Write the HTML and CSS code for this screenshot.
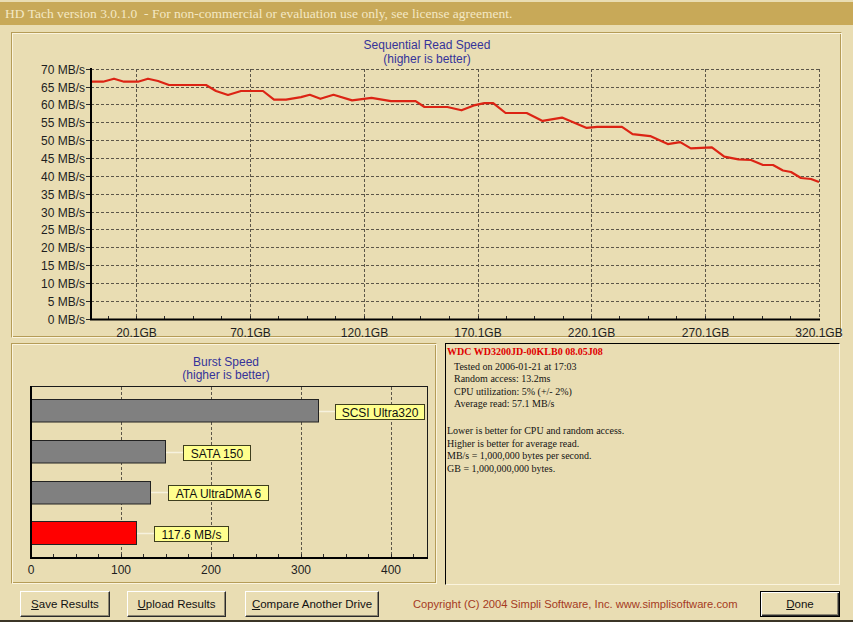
FILE: index.html
```html
<!DOCTYPE html>
<html>
<head>
<meta charset="utf-8">
<title>HD Tach 3.0.1.0</title>
<link rel="stylesheet" href="styles.css">
</head>
<body>
<div class="window">
  <div class="titlebar">HD Tach version 3.0.1.0  - For non-commercial or evaluation use only, see license agreement.</div>
  <div class="main">
    <section class="panel chart-panel">
      <svg class="chart-svg" width="827" height="302" viewBox="13 34 827 302">
        <text class="chart-title" x="426" y="48">Sequential Read Speed</text>
        <text class="chart-title" x="426" y="61.5">(higher is better)</text>
        <path class="grid" d="M90 68.5H818M90 86.5H818M90 103.5H818M90 121.5H818M90 139.5H818M90 157.5H818M90 175.5H818M90 193.5H818M90 211.5H818M90 228.5H818M90 246.5H818M90 264.5H818M90 282.5H818M90 300.5H818"/>
        <path class="grid" d="M135.5 68V318M249.5 68V318M363.5 68V318M477.5 68V318M590.5 68V318M704.5 68V318M818.5 68V318"/>
        <path class="tick" d="M85 68.5H90M85 86.5H90M85 103.5H90M85 121.5H90M85 139.5H90M85 157.5H90M85 175.5H90M85 193.5H90M85 211.5H90M85 228.5H90M85 246.5H90M85 264.5H90M85 282.5H90M85 300.5H90M85 318.5H90"/>
        <path class="tick" d="M107.5 318V315M135.5 318V315M163.5 318V315M192.5 318V315M220.5 318V315M249.5 318V315M277.5 318V315M306.5 318V315M334.5 318V315M363.5 318V315M391.5 318V315M419.5 318V315M448.5 318V315M477.5 318V315M505.5 318V315M533.5 318V315M562.5 318V315M590.5 318V315M618.5 318V315M647.5 318V315M675.5 318V315M704.5 318V315M732.5 318V315M761.5 318V315M789.5 318V315"/>
        <path class="axis" d="M90 67V319.5M89 318.5H819"/>
        <g class="ylabels">
          <text x="84" y="72.5">70 MB/s</text>
          <text x="84" y="90.5">65 MB/s</text>
          <text x="84" y="107.5">60 MB/s</text>
          <text x="84" y="125.5">55 MB/s</text>
          <text x="84" y="143.5">50 MB/s</text>
          <text x="84" y="161.5">45 MB/s</text>
          <text x="84" y="179.5">40 MB/s</text>
          <text x="84" y="197.5">35 MB/s</text>
          <text x="84" y="215.5">30 MB/s</text>
          <text x="84" y="232.5">25 MB/s</text>
          <text x="84" y="250.5">20 MB/s</text>
          <text x="84" y="268.5">15 MB/s</text>
          <text x="84" y="286.5">10 MB/s</text>
          <text x="84" y="304.5">5 MB/s</text>
          <text x="84" y="322.5">0 MB/s</text>
        </g>
        <g class="xlabels">
          <text x="135.5" y="336">20.1GB</text>
          <text x="249.5" y="336">70.1GB</text>
          <text x="363.5" y="336">120.1GB</text>
          <text x="477" y="336">170.1GB</text>
          <text x="590.5" y="336">220.1GB</text>
          <text x="704.5" y="336">270.1GB</text>
          <text x="818" y="336">320.1GB</text>
        </g>
        <polyline class="speed" points="91,80.7 102,80.7 113,77.7 123,80.7 137,80.7 147,77.7 157,80 168,84 205,84 215,90 227,94 240,90 262,90 273,98.7 285,98.7 300,96.1 308.8,93.8 319.4,97.8 332.5,93.8 351.1,99.4 370.5,96.8 390,100.1 414.6,100.1 423.5,106 446.4,106 460.5,109.3 472.8,104.4 483.4,102.1 492.2,102.1 504.6,112 525.7,112 541.6,119.9 561,116.6 585.7,126.9 596.3,125.9 621,125.9 631.6,133.1 649.2,135.1 666.8,143.1 679.2,141.1 689.8,147.4 710.9,146.4 723.3,155.6 737.4,158.3 750,159 762,164 772,164 782,169.5 790,171 800,177 810,178 818,181"/>
      </svg>
    </section>
    <div class="row">
      <section class="panel burst-panel">
        <svg class="chart-svg" width="422" height="237" viewBox="13 345 422 237">
          <text class="chart-title" x="225" y="365">Burst Speed</text>
          <text class="chart-title" x="225" y="377.5">(higher is better)</text>
          <path class="grid" d="M120.5 386V556M210.5 386V556M300.5 386V556M390.5 386V556"/>
          <path class="frame" d="M30 385.5H426.5M426.5 385V557"/>
          <path class="tick" d="M52.5 556V553M75.5 556V553M97.5 556V553M120.5 556V553M142.5 556V553M165.5 556V553M187.5 556V553M210.5 556V553M232.5 556V553M255.5 556V553M277.5 556V553M300.5 556V553M322.5 556V553M345.5 556V553M367.5 556V553M390.5 556V553M412.5 556V553"/>
          <path class="connector" d="M318 410.5H334M165 451.5H182M150 491.5H167M136 532.5H153"/>
          <rect class="bar" x="30.5" y="398.5" width="287" height="22.5"/>
          <rect class="bar" x="30.5" y="439.5" width="134" height="22.5"/>
          <rect class="bar" x="30.5" y="480.5" width="119" height="22.5"/>
          <rect class="bar bar-result" x="30.5" y="520.5" width="105" height="23"/>
          <rect class="tag" x="334.5" y="403.5" width="89" height="15"/>
          <rect class="tag" x="182.5" y="444.5" width="67" height="15"/>
          <rect class="tag" x="167.5" y="484.5" width="100" height="15"/>
          <rect class="tag" x="153.5" y="525.5" width="74" height="15"/>
          <g class="tag-text">
            <text x="379" y="415.5">SCSI Ultra320</text>
            <text x="216" y="456.5">SATA 150</text>
            <text x="217.5" y="496.5">ATA UltraDMA 6</text>
            <text x="190.5" y="537.5">117.6 MB/s</text>
          </g>
          <path class="axis" d="M30 385V558M29 557H427"/>
          <g class="xlabels">
            <text x="30" y="573">0</text>
            <text x="120" y="573">100</text>
            <text x="210" y="573">200</text>
            <text x="300" y="573">300</text>
            <text x="390" y="573">400</text>
          </g>
        </svg>
      </section>
      <section class="info-panel">
        <div class="drive">WDC WD3200JD-00KLB0 08.05J08</div>
        <div class="stats">
          <div>Tested on 2006-01-21 at 17:03</div>
          <div>Random access: 13.2ms</div>
          <div>CPU utilization: 5% (+/- 2%)</div>
          <div>Average read: 57.1 MB/s</div>
        </div>
        <div class="notes">
          <div>Lower is better for CPU and random access.</div>
          <div>Higher is better for average read.</div>
          <div>MB/s = 1,000,000 bytes per second.</div>
          <div>GB = 1,000,000,000 bytes.</div>
        </div>
      </section>
    </div>
  </div>
  <footer class="footer">
    <button class="btn btn-save"><u>S</u>ave Results</button>
    <button class="btn btn-upload"><u>U</u>pload Results</button>
    <button class="btn btn-compare"><u>C</u>ompare Another Drive</button>
    <span class="copyright">Copyright (C) 2004 Simpli Software, Inc. www.simplisoftware.com</span>
    <button class="btn btn-done"><u>D</u>one</button>
  </footer>
</div>
</body>
</html>
```

FILE: styles.css
```css
* { box-sizing: border-box; }
html, body { margin: 0; padding: 0; }
body {
  background: #E9DDB3;
  font-family: "Liberation Sans", Arial, sans-serif;
}
.window {
  width: 853px;
  height: 622px;
  overflow: hidden;
  background: #E9DDB3;
  padding-top: 2px;
  box-shadow: inset 0 -2px 0 #3b3526;
}
.titlebar {
  height: 23px;
  background: #C8A958;
  color: #F4E8C4;
  font: 13.5px/23px "Liberation Serif", "Times New Roman", serif;
  padding-left: 5px;
  white-space: pre;
}
.main { padding: 7px 11px 0 11px; }
.panel {
  border: 1px solid;
  border-color: #B59C57 #FBF4DE #FBF4DE #B59C57;
  box-shadow: inset 1px 1px 0 #FBF4DE, inset -1px -1px 0 #B59C57;
  background: #E9DDB3;
  padding: 2px;
}
.chart-panel { width: 831px; height: 306px; }
.chart-svg { display: block; overflow: visible; }
.chart-title {
  font: 12px "Liberation Sans", Arial, sans-serif;
  fill: #35339A;
  text-anchor: middle;
}
.grid { fill: none; stroke: #5c5648; stroke-width: 1; stroke-dasharray: 3 2; }
.tick { fill: none; stroke: #2a2a2a; stroke-width: 1; }
.axis { fill: none; stroke: #000; stroke-width: 2; }
.frame { fill: none; stroke: #1a1a1a; stroke-width: 1; }
.ylabels text {
  font: 12px "Liberation Sans", Arial, sans-serif;
  fill: #1e1e1e;
  text-anchor: end;
}
.xlabels text {
  font: 12px "Liberation Sans", Arial, sans-serif;
  fill: #1e1e1e;
  text-anchor: middle;
}
.speed {
  fill: none;
  stroke: #DC2414;
  stroke-width: 2.2;
  stroke-linejoin: round;
}
.row { display: flex; margin-top: 5px; }
.burst-panel { width: 426px; height: 241px; }
.bar { fill: #808080; stroke: #222; stroke-width: 1; }
.bar-result { fill: #FF0000; }
.connector { fill: none; stroke: #F7F2DE; stroke-width: 1.5; }
.tag { fill: #FFFF8E; stroke: #3e3e1e; stroke-width: 1; }
.tag-text text {
  font: 12px "Liberation Sans", Arial, sans-serif;
  fill: #111;
  text-anchor: middle;
}
.info-panel {
  width: 395px;
  height: 242px;
  margin-left: 8px;
  border: 1px solid;
  border-color: #000 #FBF4DE #FBF4DE #000;
  padding: 2px 0 0 1px;
  font: 10px/12.6px "Liberation Serif", "Times New Roman", serif;
  color: #141414;
}
.drive {
  color: #E00000;
  font-weight: bold;
  margin-bottom: 2px;
}
.stats { padding-left: 7px; }
.notes { margin-top: 14px; }
.footer {
  display: flex;
  align-items: center;
  height: 26px;
  margin-top: 6px;
  padding-left: 20px;
}
.btn {
  height: 26px;
  padding: 0;
  background: #E9DDB3;
  border: 1px solid;
  border-color: #FFFFFF #2a2a2a #2a2a2a #FFFFFF;
  box-shadow: inset -1px -1px 0 #8E8772;
  font: 11.5px "Liberation Sans", Arial, sans-serif;
  color: #111;
}
.btn-save { width: 90px; margin-right: 17px; }
.btn-upload { width: 99px; margin-right: 19px; }
.btn-compare { width: 134px; }
.copyright {
  margin-left: 34px;
  font: 11.2px "Liberation Sans", Arial, sans-serif;
  color: #A53A22;
  white-space: nowrap;
}
.btn-done {
  width: 80px;
  margin-left: auto;
  margin-right: 13px;
  border: 1px solid #000;
  box-shadow: inset 1px 1px 0 #FFFFFF, inset -1px -1px 0 #2a2a2a, inset -2px -2px 0 #8E8772;
}
```
